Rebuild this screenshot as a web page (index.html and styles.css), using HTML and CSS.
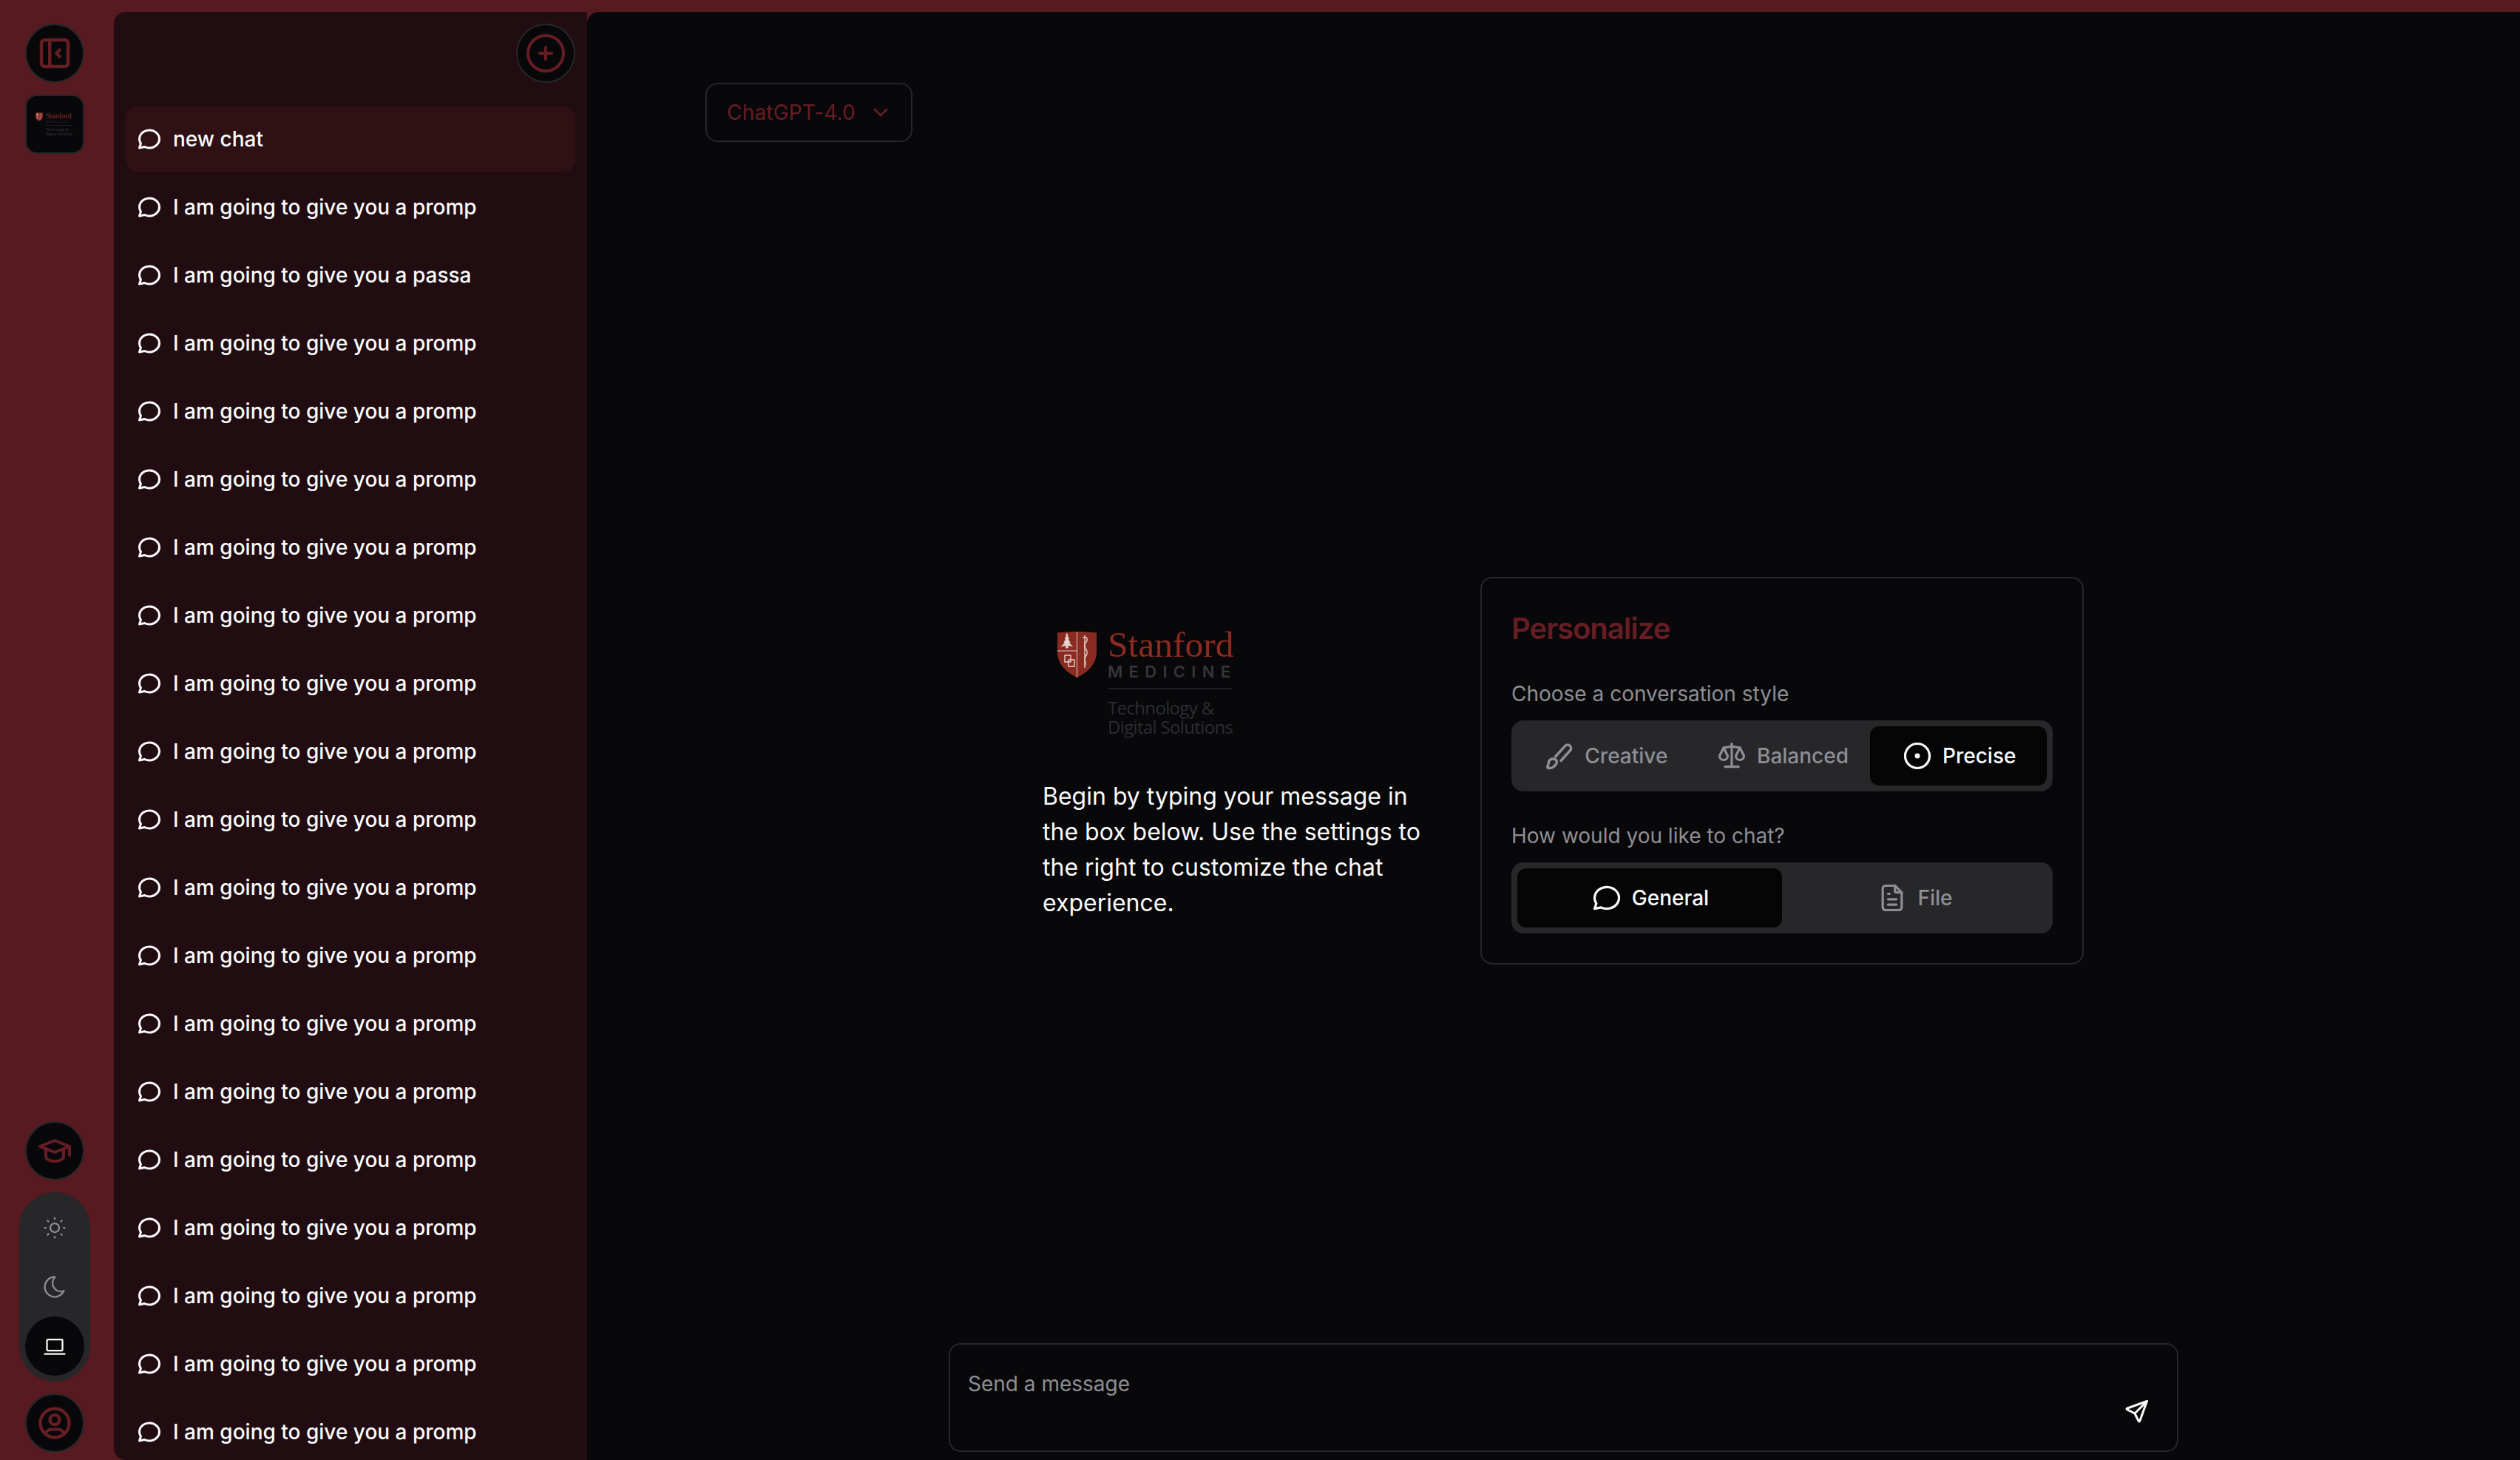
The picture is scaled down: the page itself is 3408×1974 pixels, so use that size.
FILE: index.html
```html
<!DOCTYPE html>
<html lang="en">
<head>
<meta charset="utf-8">
<title>Chat</title>
<link rel="stylesheet" href="styles.css">
</head>
<body>
<svg class="defs" width="0" height="0" aria-hidden="true">
  <symbol id="msg" viewBox="0 0 24 24"><path d="M3 20l1.3 -3.9c-2.324 -3.437 -1.426 -7.872 2.1 -10.374c3.526 -2.501 8.59 -2.296 11.845 .48c3.255 2.777 3.695 7.266 1.029 10.501c-2.666 3.235 -7.615 4.215 -11.574 2.293l-4.7 1"/></symbol>
  <symbol id="shield-logo" viewBox="0 0 53 62">
    <path class="shield-fill" d="M0 1.5C9 .5 18 0 26.5 0S44 .5 53 1.5V27c0 17-12 28-26.5 35C12 55 0 44 0 27z"/>
    <path class="shield-line" d="M26.5 0v62M0 26h26.5"/>
    <path class="shield-mark" d="M12.7 1.500l2 4-1 0 2.500 4.500-1.500 0 3 5 -1.800 0 5.600 5.500-6.800-1.500 0 3.500-3.500 0 0-3.500-6.800 1.500 5.600-5.500-1.800 0 3-5-1.500 0 2.500-4.500-1 0z"/>
    <path class="shield-thin" d="M10 32h8v9h-8zM15 38h8v9h-8z"/>
    <path class="shield-thin" d="M34 8c5-2 7 1 6 4-1 4-5 5-3 9 2 3 4 5 3 9-1 4-4 4-3 8 1 3 2 4 .5 8"/>
    <path class="shield-thin" d="M37 5v44"/>
  </symbol>
</svg>
<div class="app">
  <nav class="rail">
    <div class="rail-top">
      <button class="round"><svg class="ic red" width="54" height="54" viewBox="0 0 24 24"><path d="M4 6a2 2 0 0 1 2 -2h12a2 2 0 0 1 2 2v12a2 2 0 0 1 -2 2h-12a2 2 0 0 1 -2 -2z"/><path d="M9 4v16"/><path d="M15 10l-2 2l2 2"/></svg></button>
      <div class="tile">
        <div class="mini-logo">
          <svg class="mini-shield" viewBox="0 0 53 62"><use href="#shield-logo"/></svg>
          <div class="mini-text">
            <span class="mini-stanford">Stanford</span>
            <span class="mini-med">MEDICINE</span>
            <span class="mini-rule"></span>
            <span class="mini-sub">Technology &amp;<br>Digital Solutions</span>
          </div>
        </div>
      </div>
    </div>
    <div class="rail-bottom">
      <button class="round"><svg class="ic red" width="48" height="48" viewBox="0 0 24 24"><path d="M22 9l-10 -4l-10 4l10 4l10 -4v6"/><path d="M6 10.6v5.4a6 3 0 0 0 12 0v-5.4"/></svg></button>
      <div class="theme">
        <div class="theme-btn"><svg class="ic muted fine" width="36" height="36" viewBox="0 0 24 24"><path d="M8 12a4 4 0 1 0 8 0a4 4 0 1 0 -8 0"/><path d="M3 12h1m8 -9v1m8 8h1m-9 8v1m-6.4 -15.4l.7 .7m12.1 -.7l-.7 .7m0 11.4l.7 .7m-12.1 -.7l-.7 .7"/></svg></div>
        <div class="theme-btn"><svg class="ic muted fine" width="36" height="36" viewBox="0 0 24 24"><path d="M12 3c.132 0 .263 0 .393 0a7.5 7.5 0 0 0 7.92 12.446a9 9 0 1 1 -8.313 -12.454z"/></svg></div>
        <div class="theme-btn active"><svg class="ic white fine" width="36" height="36" viewBox="0 0 24 24"><path d="M3 19h18"/><path d="M5 7a1 1 0 0 1 1 -1h12a1 1 0 0 1 1 1v8a1 1 0 0 1 -1 1h-12a1 1 0 0 1 -1 -1z"/></svg></div>
      </div>
      <button class="round"><svg class="ic red" width="52" height="52" viewBox="0 0 24 24"><path d="M3 12a9 9 0 1 0 18 0a9 9 0 1 0 -18 0"/><path d="M9 10a3 3 0 1 0 6 0a3 3 0 1 0 -6 0"/><path d="M6.168 18.849a4 4 0 0 1 3.832 -2.849h4a4 4 0 0 1 3.834 2.855"/></svg></button>
    </div>
  </nav>

  <aside class="sidebar">
    <div class="side-head">
      <button class="round"><svg class="ic red thin" width="64" height="64" viewBox="0 0 24 24"><path d="M3 12a9 9 0 1 0 18 0a9 9 0 0 0 -18 0"/><path d="M9 12h6"/><path d="M12 9v6"/></svg></button>
    </div>
    <ul class="chats">
      <li class="chat current"><svg class="ic white" width="36" height="36"><use href="#msg"/></svg><span>new chat</span></li>
      <li class="chat"><svg class="ic white" width="36" height="36"><use href="#msg"/></svg><span>I am going to give you a promp</span></li>
      <li class="chat"><svg class="ic white" width="36" height="36"><use href="#msg"/></svg><span>I am going to give you a passa</span></li>
      <li class="chat"><svg class="ic white" width="36" height="36"><use href="#msg"/></svg><span>I am going to give you a promp</span></li>
      <li class="chat"><svg class="ic white" width="36" height="36"><use href="#msg"/></svg><span>I am going to give you a promp</span></li>
      <li class="chat"><svg class="ic white" width="36" height="36"><use href="#msg"/></svg><span>I am going to give you a promp</span></li>
      <li class="chat"><svg class="ic white" width="36" height="36"><use href="#msg"/></svg><span>I am going to give you a promp</span></li>
      <li class="chat"><svg class="ic white" width="36" height="36"><use href="#msg"/></svg><span>I am going to give you a promp</span></li>
      <li class="chat"><svg class="ic white" width="36" height="36"><use href="#msg"/></svg><span>I am going to give you a promp</span></li>
      <li class="chat"><svg class="ic white" width="36" height="36"><use href="#msg"/></svg><span>I am going to give you a promp</span></li>
      <li class="chat"><svg class="ic white" width="36" height="36"><use href="#msg"/></svg><span>I am going to give you a promp</span></li>
      <li class="chat"><svg class="ic white" width="36" height="36"><use href="#msg"/></svg><span>I am going to give you a promp</span></li>
      <li class="chat"><svg class="ic white" width="36" height="36"><use href="#msg"/></svg><span>I am going to give you a promp</span></li>
      <li class="chat"><svg class="ic white" width="36" height="36"><use href="#msg"/></svg><span>I am going to give you a promp</span></li>
      <li class="chat"><svg class="ic white" width="36" height="36"><use href="#msg"/></svg><span>I am going to give you a promp</span></li>
      <li class="chat"><svg class="ic white" width="36" height="36"><use href="#msg"/></svg><span>I am going to give you a promp</span></li>
      <li class="chat"><svg class="ic white" width="36" height="36"><use href="#msg"/></svg><span>I am going to give you a promp</span></li>
      <li class="chat"><svg class="ic white" width="36" height="36"><use href="#msg"/></svg><span>I am going to give you a promp</span></li>
      <li class="chat"><svg class="ic white" width="36" height="36"><use href="#msg"/></svg><span>I am going to give you a promp</span></li>
      <li class="chat"><svg class="ic white" width="36" height="36"><use href="#msg"/></svg><span>I am going to give you a promp</span></li>
    </ul>
  </aside>

  <main class="main">
    <div class="model-row">
      <div class="model">ChatGPT-4.0<svg class="ic red" width="32" height="32" viewBox="0 0 24 24"><path d="M6 9l6 6l6 -6"/></svg></div>
    </div>
    <div class="center">
      <section class="intro">
        <div class="logo">
          <svg class="logo-shield" viewBox="0 0 53 62"><use href="#shield-logo"/></svg>
          <div class="logo-text">
            <div class="logo-stanford">Stanford</div>
            <div class="logo-med">MEDICINE</div>
            <div class="logo-rule"></div>
            <div class="logo-sub">Technology &amp;</div>
            <div class="logo-sub">Digital Solutions</div>
          </div>
        </div>
        <p class="intro-text">Begin by typing your message in the box below. Use the settings to the right to customize the chat experience.</p>
      </section>
      <section class="card">
        <h2 class="card-title">Personalize</h2>
        <div class="label">Choose a conversation style</div>
        <div class="seg">
          <div class="seg-btn"><svg class="ic muted" width="44" height="44" viewBox="1 1 22 22"><path d="M9.25 12.5L15.900 5.160A2.300 2.300 0 0 1 19.300 8.240L13 15.250"/><path d="M4 20c-.5-1 .5-1.500.6-3 .1-2.300 2-3.400 4-2.900 1.400.4 2 1.800 1.200 3.200-1 2-3.500 3.600-5.800 2.700z"/></svg>Creative</div>
          <div class="seg-btn"><svg class="ic muted" width="44" height="44" viewBox="0 0 24 24"><path d="M7 20h10"/><path d="M6 6l6 -1l6 1"/><path d="M12 3v17"/><path d="M9 12l-3 -6l-3 6a3 3 0 0 0 6 0"/><path d="M21 12l-3 -6l-3 6a3 3 0 0 0 6 0"/></svg>Balanced</div>
          <div class="seg-btn active"><svg class="ic white" width="44" height="44" viewBox="0 0 24 24"><path d="M11 12a1 1 0 1 0 2 0a1 1 0 1 0 -2 0"/><path d="M3 12a9 9 0 1 0 18 0a9 9 0 1 0 -18 0"/></svg>Precise</div>
        </div>
        <div class="label second">How would you like to chat?</div>
        <div class="seg">
          <div class="seg-btn active"><svg class="ic white" width="44" height="44"><use href="#msg"/></svg>General</div>
          <div class="seg-btn"><svg class="ic muted" width="44" height="44" viewBox="0 0 24 24"><path d="M14 3v4a1 1 0 0 0 1 1h4"/><path d="M17 21h-10a2 2 0 0 1 -2 -2v-14a2 2 0 0 1 2 -2h7l5 5v11a2 2 0 0 1 -2 2z"/><path d="M9 9h1"/><path d="M9 13h6"/><path d="M9 17h6"/></svg>File</div>
        </div>
      </section>
    </div>
    <div class="composer">
      <span class="placeholder">Send a message</span>
      <svg class="ic white send" width="36" height="36" viewBox="0 0 24 24"><path d="M10 14l11 -11"/><path d="M21 3l-6.500 18a.55 .55 0 0 1 -1 0l-3.500 -7l-7 -3.500a.55 .55 0 0 1 0 -1l18 -6.500"/></svg>
    </div>
  </main>
</div>
</body>
</html>
```
FILE: styles.css
```css
* { box-sizing: border-box; }
html, body { margin: 0; height: 100%; overflow: hidden; }
body { background: #561a20; font-family: Inter, "Liberation Sans", sans-serif; color: #fafafa; }
.defs { position: absolute; }
.app { display: flex; height: 1974px; padding-top: 16px; }

.ic { fill: none; stroke: currentColor; stroke-width: 2; stroke-linecap: round; stroke-linejoin: round; flex: none; display: block; }
.ic.thin { stroke-width: 1.5; }
.ic.fine { stroke-width: 1.5; }
.red { color: #661d24; }
.muted { color: #8e8e94; }
.white { color: #fafafa; }

.shield-fill { fill: #8b2a20; }
.shield-line { fill: none; stroke: #d9c6c2; stroke-width: 1; }
.shield-mark { fill: #e3d2ce; }
.shield-thin { fill: none; stroke: #e3d2ce; stroke-width: 1.400; }

.rail { width: 154px; flex: none; display: flex; flex-direction: column; justify-content: space-between; align-items: center; padding: 16px 6px 10px 0; }
.rail-top, .rail-bottom { display: flex; flex-direction: column; align-items: center; }
.rail-top { gap: 16px; }
.rail-bottom { gap: 16px; }
.round { width: 80px; height: 80px; padding: 0; border-radius: 50%; background: #08080a; border: 2px solid #27272a; display: flex; align-items: center; justify-content: center; }
.tile { width: 80px; height: 80px; border-radius: 16px; background: #08080a; border: 2px solid #27272a; display: flex; align-items: center; justify-content: center; }
.mini-logo { display: flex; gap: 4px; margin-left: -3px; }
.mini-shield { width: 10px; height: 12px; flex: none; }
.mini-text { display: flex; flex-direction: column; width: 35px; }
.mini-stanford { font-family: "Liberation Serif", serif; font-size: 10px; line-height: 9px; color: #8b2a20; }
.mini-med { font-size: 4px; line-height: 5px; letter-spacing: 1.500px; color: #35363a; white-space: nowrap; margin-top: 1px; }
.mini-rule { height: 1px; background: #1e1f22; margin: 2px 0; }
.mini-sub { font-family: "Open Sans", sans-serif; font-size: 4.800px; line-height: 6px; color: #3a3b40; white-space: nowrap; }

.theme { width: 96px; height: 256px; border-radius: 48px; background: #27272a; display: flex; flex-direction: column; align-items: center; padding: 8px 0; }
.theme-btn { width: 80px; flex: 1; display: flex; align-items: center; justify-content: center; border-radius: 50%; }
.theme-btn.active { background: #08080a; }

.sidebar { width: 640px; flex: none; background: #210d11; border-radius: 16px 0 0 16px; padding: 16px 16px 0; overflow: hidden; display: flex; flex-direction: column; }
.side-head { display: flex; justify-content: flex-end; height: 80px; flex: none; margin-bottom: 32px; }
.chats { list-style: none; margin: 0; padding: 0; display: flex; flex-direction: column; gap: 4px; }
.chat { height: 88px; flex: none; padding: 0 14px; display: flex; align-items: center; gap: 14px; border-radius: 16px; font-size: 28px; font-weight: 500; white-space: nowrap; }
.chat.current { background: #2e1015; }

.main { flex: 1; min-width: 0; background: #08080a; border-radius: 16px 0 0 0; display: flex; flex-direction: column; position: relative; }
.model-row { padding: 96px 0 0 160px; height: 175px; flex: none; }
.model { width: 280px; height: 80px; border: 2px solid #27272a; border-radius: 16px; color: #661d24; font-size: 28px; letter-spacing: .2px; display: flex; align-items: center; gap: 18px; padding-left: 27px; }
.center { height: 1129px; flex: none; display: flex; align-items: flex-start; gap: 72px; padding: 589px 0 0 616px; }
.intro { width: 520px; flex: none; display: flex; flex-direction: column; }
.logo { display: flex; gap: 15px; margin: 70px 0 0 20px; height: 138px; }
.logo-shield { width: 53px; height: 62px; flex: none; margin-top: 4px; }
.logo-text { width: 168px; }
.logo-stanford { font-family: "Liberation Serif", serif; font-size: 49.500px; line-height: 44px; color: #8b2a20; white-space: nowrap; }
.logo-med { font-size: 22px; line-height: 24px; font-weight: 600; letter-spacing: 8.300px; color: #35363a; white-space: nowrap; margin-top: 2px; }
.logo-rule { height: 2px; background: #1e1f22; margin: 10px 0 12px; }
.logo-sub { font-family: "Open Sans", sans-serif; font-size: 24px; line-height: 26px; color: #2c2d31; white-space: nowrap; letter-spacing: -.65px; }
.intro-text { margin: 65px 0 0; font-size: 32px; line-height: 48px; }
.card { width: 816px; height: 524px; flex: none; border: 2px solid #27272a; border-radius: 16px; padding: 40px; }
.card-title { margin: 0; font-size: 40px; line-height: 56px; font-weight: 600; letter-spacing: -1px; color: #661d24; }
.label { margin-top: 40px; font-size: 28px; line-height: 40px; color: #8e8e94; }
.label.second { margin-top: 40px; }
.seg { margin-top: 16px; height: 96px; background: #27272a; border-radius: 16px; padding: 8px; display: flex; }
.seg-btn { flex: 1 1 0; display: flex; align-items: center; justify-content: center; gap: 12px; font-size: 28px; font-weight: 500; color: #8e8e94; border-radius: 12px; }
.seg-btn .ic { stroke-width: 1.750; }
.seg-btn.active { background: #050506; color: #fafafa; }
.composer { position: absolute; left: 489px; top: 1800px; width: 1663px; height: 147px; border: 2px solid #27272a; border-radius: 16px; padding: 24px; font-size: 28px; color: #8e8e94; }
.placeholder { display: block; line-height: 40px; margin-top: 9px; }
.send { position: absolute; right: 36px; bottom: 35px; }
```
